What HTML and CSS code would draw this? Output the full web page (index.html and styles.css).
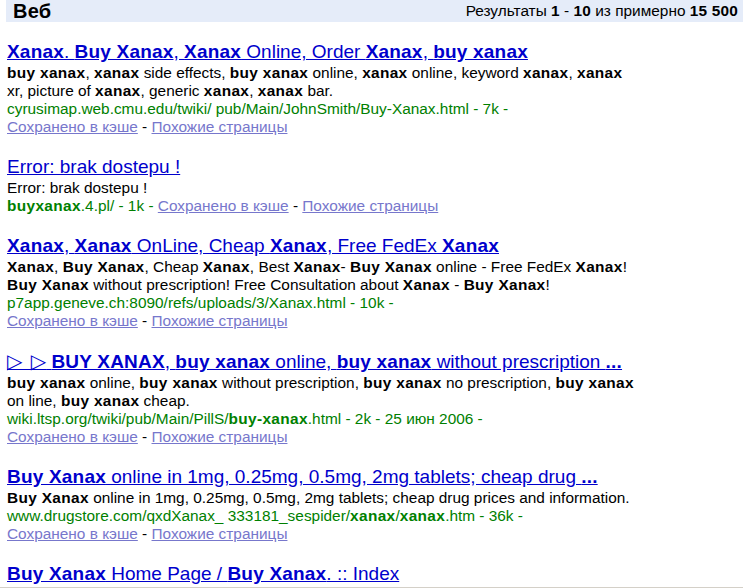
FILE: index.html
```html
<!DOCTYPE html>
<html lang="ru">
<head>
<meta charset="utf-8">
<title>Веб — xanax</title>
<link rel="stylesheet" href="styles.css">
</head>
<body>
<div class="topbar">
  <span class="section">Веб</span>
  <span class="stats">Результаты <b>1</b> - <b>10</b> из примерно <b>15 500</b></span>
</div>
<div class="results">
  <div class="result">
    <a class="title" href="#"><b>Xanax</b>. <b>Buy Xanax</b>, <b>Xanax</b> Online, Order <b>Xanax</b>, <b>buy xanax</b></a>
    <div class="body">
      <b>buy xanax</b>, <b>xanax</b> side effects, <b>buy xanax</b> online, <b>xanax</b> online, keyword <b>xanax</b>, <b>xanax</b> xr, picture of <b>xanax</b>, generic <b>xanax</b>, <b>xanax</b> bar.<br>
      <span class="url">cyrusimap.web.cmu.edu/twiki/ pub/Main/JohnSmith/Buy-Xanax.html - 7k - </span><span class="cache"><a href="#">Сохранено в кэше</a> - <a href="#">Похожие страницы</a></span>
    </div>
  </div>
  <div class="result">
    <a class="title" href="#">Error: brak dostepu !</a>
    <div class="body">
      Error: brak dostepu !<br>
      <span class="url"><b>buyxanax</b>.4.pl/ - 1k - </span><span class="cache"><a href="#">Сохранено в кэше</a> - <a href="#">Похожие страницы</a></span>
    </div>
  </div>
  <div class="result">
    <a class="title" href="#"><b>Xanax</b>, <b>Xanax</b> OnLine, Cheap <b>Xanax</b>, Free FedEx <b>Xanax</b></a>
    <div class="body">
      <b>Xanax</b>, <b>Buy Xanax</b>, Cheap <b>Xanax</b>, Best <b>Xanax</b>- <b>Buy Xanax</b> online - Free FedEx <b>Xanax</b>! <b>Buy Xanax</b> without prescription! Free Consultation about <b>Xanax</b> - <b>Buy Xanax</b>!<br>
      <span class="url">p7app.geneve.ch:8090/refs/uploads/3/Xanax.html - 10k - </span><span class="cache"><a href="#">Сохранено в кэше</a> - <a href="#">Похожие страницы</a></span>
    </div>
  </div>
  <div class="result">
    <a class="title" href="#"><span class="tri">▷ ▷</span> <b>BUY XANAX</b>, <b>buy xanax</b> online, <b>buy xanax</b> without prescription <b>...</b></a>
    <div class="body">
      <b>buy xanax</b> online, <b>buy xanax</b> without prescription, <b>buy xanax</b> no prescription, <b>buy xanax</b> on line, <b>buy xanax</b> cheap.<br>
      <span class="url">wiki.ltsp.org/twiki/pub/Main/PillS/<b>buy-xanax</b>.html - 2k - 25 июн 2006 - </span><span class="cache"><a href="#">Сохранено в кэше</a> - <a href="#">Похожие страницы</a></span>
    </div>
  </div>
  <div class="result">
    <a class="title" href="#"><b>Buy Xanax</b> online in 1mg, 0.25mg, 0.5mg, 2mg tablets; cheap drug <b>...</b></a>
    <div class="body">
      <b>Buy Xanax</b> online in 1mg, 0.25mg, 0.5mg, 2mg tablets; cheap drug prices and information.<br>
      <span class="url">www.drugstore.com/qxdXanax_ 333181_sespider/<b>xanax</b>/<b>xanax</b>.htm - 36k - </span><span class="cache"><a href="#">Сохранено в кэше</a> - <a href="#">Похожие страницы</a></span>
    </div>
  </div>
  <div class="result">
    <a class="title" href="#"><b>Buy Xanax</b> Home Page / <b>Buy Xanax</b>. :: Index</a>
  </div>
</div>
<div class="frame-edge"></div>
</body>
</html>
```

FILE: styles.css
```css
html, body {
  margin: 0;
  padding: 0;
  background: #ffffff;
}
body {
  font-family: "Liberation Sans", Arial, sans-serif;
  color: #000000;
  overflow: hidden;
}
b {
  letter-spacing: 0.35px;
}
.topbar {
  margin-left: 6px;
  height: 22px;
  background: #e5ecf9;
  display: flex;
  justify-content: space-between;
  align-items: center;
  padding: 0 5px 0 7px;
}
.section {
  font-size: 20px;
  font-weight: bold;
}
.section,
.stats b {
  letter-spacing: 0.2px;
}
.stats {
  font-size: 15.4px;
}
.results {
  padding: 19px 0 0 7px;
}
.result {
  margin-bottom: 20px;
}
.title {
  display: block;
  font-size: 19px;
  line-height: 22px;
  color: #0000cc;
  text-decoration: underline;
}
.title b {
  letter-spacing: 0.2px;
}
.tri {
  font-family: "DejaVu Sans", sans-serif;
  font-size: 20px;
  word-spacing: 2px;
}
.body {
  width: 632px;
  padding-top: 1px;
  font-size: 15.4px;
  line-height: 18px;
}
.url {
  color: #008000;
}
.cache {
  white-space: nowrap;
}
.cache a {
  color: #7777cc;
  text-decoration: underline;
}
.frame-edge {
  position: fixed;
  left: 0;
  right: 0;
  bottom: 0;
  height: 1px;
  background: #d4d0c8;
}
```
